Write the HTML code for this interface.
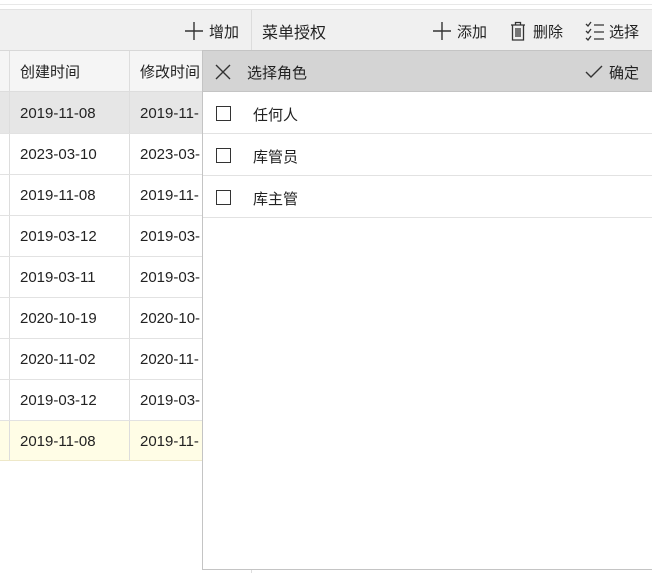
<!DOCTYPE html>
<html><head><meta charset="utf-8"><style>
*{margin:0;padding:0;box-sizing:border-box}
body{width:652px;height:573px;overflow:hidden;background:#fff;font-family:"Liberation Sans","Noto Sans CJK SC",sans-serif;font-size:15px;color:#222;position:relative}
.a{position:absolute}
.t{display:flex;align-items:center}
.d{padding-top:2px}
</style></head><body>
<div class="a" style="left:0;top:4px;width:652px;height:1px;background:#e8e8e8"></div>
<div class="a" style="left:0;top:9px;width:652px;height:42px;background:#f0f0f0;border-top:1px solid #e2e2e2;border-bottom:1px solid #d8d8d8"></div>
<div class="a" style="left:251px;top:10px;width:1px;height:40px;background:#dcdcdc"></div>
<div class="a t" style="left:184px;top:20px;height:22px"><svg width="20" height="20"><path d="M10 1V19M1 10H19" stroke="#333" stroke-width="1.4"/></svg><span style="margin-left:5px">增加</span></div>
<div class="a t" style="left:262px;top:20px;height:22px;font-size:16px">菜单授权</div>
<div class="a t" style="left:432px;top:20px;height:22px"><svg width="20" height="20"><path d="M10 1V19M1 10H19" stroke="#333" stroke-width="1.4"/></svg><span style="margin-left:5px">添加</span></div>
<div class="a t" style="left:510px;top:20px;height:22px"><svg width="16" height="20"><path d="M1 4H15M5.5 4V1.5H10.5V4M2.5 4V19H13.5V4M6 7V16M8 7V16M10 7V16" stroke="#333" stroke-width="1.3" fill="none"/></svg><span style="margin-left:7px">删除</span></div>
<div class="a t" style="left:585px;top:20px;height:22px"><svg width="20" height="20"><path d="M1 3L3 5L6 1M1 10L3 12L6 8M1 17L3 19L6 15M9 4H19M9 11H19M9 18H19" stroke="#333" stroke-width="1.3" fill="none"/></svg><span style="margin-left:4px">选择</span></div>

<div class="a" style="left:0;top:51px;width:210px;height:41px;background:#f5f5f5;border-bottom:1px solid #ddd"></div>
<div class="a t" style="left:20px;top:51px;height:41px">创建时间</div>
<div class="a t" style="left:140px;top:51px;height:41px">修改时间</div>
<div class="a" style="left:0;top:92px;width:210px;height:41px;background:#e6e6e6"></div>
<div class="a" style="left:0;top:420px;width:210px;height:41px;background:#fffde6"></div>
<div class="a" style="left:9px;top:51px;width:1px;height:410px;background:#ddd"></div>
<div class="a" style="left:129px;top:51px;width:1px;height:410px;background:#ddd"></div>

<div class="a" style="left:0;top:133px;width:210px;height:1px;background:#e2e2e2"></div>
<div class="a" style="left:0;top:174px;width:210px;height:1px;background:#e2e2e2"></div>
<div class="a" style="left:0;top:215px;width:210px;height:1px;background:#e2e2e2"></div>
<div class="a" style="left:0;top:256px;width:210px;height:1px;background:#e2e2e2"></div>
<div class="a" style="left:0;top:297px;width:210px;height:1px;background:#e2e2e2"></div>
<div class="a" style="left:0;top:338px;width:210px;height:1px;background:#e2e2e2"></div>
<div class="a" style="left:0;top:379px;width:210px;height:1px;background:#e2e2e2"></div>
<div class="a" style="left:0;top:420px;width:210px;height:1px;background:#e2e2e2"></div>
<div class="a" style="left:0;top:460px;width:210px;height:1px;background:#eee8c8"></div>

<div class="a t d" style="left:20px;top:92px;height:41px">2019-11-08</div><div class="a t d" style="left:140px;top:92px;height:41px">2019-11-</div>
<div class="a t d" style="left:20px;top:133px;height:41px">2023-03-10</div><div class="a t d" style="left:140px;top:133px;height:41px">2023-03-</div>
<div class="a t d" style="left:20px;top:174px;height:41px">2019-11-08</div><div class="a t d" style="left:140px;top:174px;height:41px">2019-11-</div>
<div class="a t d" style="left:20px;top:215px;height:41px">2019-03-12</div><div class="a t d" style="left:140px;top:215px;height:41px">2019-03-</div>
<div class="a t d" style="left:20px;top:256px;height:41px">2019-03-11</div><div class="a t d" style="left:140px;top:256px;height:41px">2019-03-</div>
<div class="a t d" style="left:20px;top:297px;height:41px">2020-10-19</div><div class="a t d" style="left:140px;top:297px;height:41px">2020-10-</div>
<div class="a t d" style="left:20px;top:338px;height:41px">2020-11-02</div><div class="a t d" style="left:140px;top:338px;height:41px">2020-11-</div>
<div class="a t d" style="left:20px;top:379px;height:41px">2019-03-12</div><div class="a t d" style="left:140px;top:379px;height:41px">2019-03-</div>
<div class="a t d" style="left:20px;top:420px;height:41px">2019-11-08</div><div class="a t d" style="left:140px;top:420px;height:41px">2019-11-</div>

<div class="a" style="left:251px;top:565px;width:1px;height:8px;background:#ddd"></div>
<div class="a" style="left:202px;top:50px;width:450px;height:520px;background:#fff;border:1px solid #c4c4c4;border-right:none"></div>
<div class="a" style="left:203px;top:51px;width:449px;height:41px;background:#d4d4d4;border-bottom:1px solid #c4c4c4"></div>
<div class="a t" style="left:214px;top:61px;height:22px"><svg width="18" height="18"><path d="M2 2L16 16M16 2L2 16" stroke="#333" stroke-width="1.4"/></svg><span style="margin-left:15px">选择角色</span></div>
<div class="a t" style="left:585px;top:61px;height:22px"><svg width="18" height="16"><path d="M1 8L6 13L17 2" stroke="#333" stroke-width="1.4" fill="none"/></svg><span style="margin-left:6px">确定</span></div>
<div class="a" style="left:203px;top:133px;width:449px;height:1px;background:#e2e2e2"></div>
<div class="a" style="left:203px;top:175px;width:449px;height:1px;background:#e2e2e2"></div>
<div class="a" style="left:203px;top:217px;width:449px;height:1px;background:#e2e2e2"></div>
<div class="a" style="left:216px;top:106px;width:15px;height:15px;border:1.5px solid #333"></div>
<div class="a" style="left:216px;top:148px;width:15px;height:15px;border:1.5px solid #333"></div>
<div class="a" style="left:216px;top:190px;width:15px;height:15px;border:1.5px solid #333"></div>
<div class="a t" style="left:253px;top:103px;height:22px">任何人</div>
<div class="a t" style="left:253px;top:145px;height:22px">库管员</div>
<div class="a t" style="left:253px;top:187px;height:22px">库主管</div>
</body></html>
